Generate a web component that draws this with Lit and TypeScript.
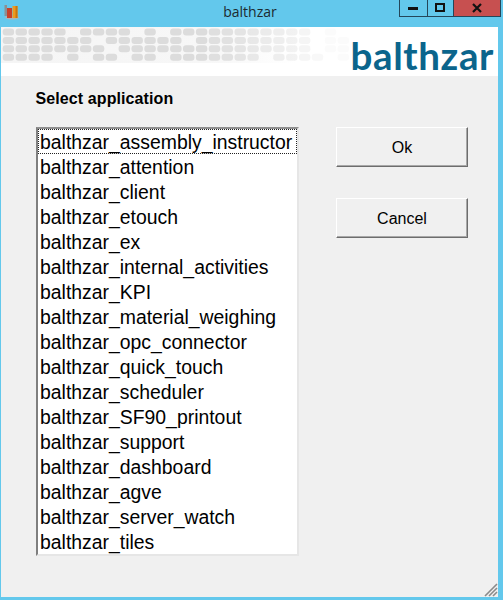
import { LitElement, html, css, svg } from "lit";
import { customElement } from "lit/decorators.js";

const APPS = [
  "balthzar_assembly_instructor",
  "balthzar_attention",
  "balthzar_client",
  "balthzar_etouch",
  "balthzar_ex",
  "balthzar_internal_activities",
  "balthzar_KPI",
  "balthzar_material_weighing",
  "balthzar_opc_connector",
  "balthzar_quick_touch",
  "balthzar_scheduler",
  "balthzar_SF90_printout",
  "balthzar_support",
  "balthzar_dashboard",
  "balthzar_agve",
  "balthzar_server_watch",
  "balthzar_tiles",
];

const PATTERN = [
  "111110111101011111111111010",
  "111111101111110111111111011",
  "111111110111111111111111011",
  "111101011011011111110111101",
];

function patternCells() {
  const cells: unknown[] = [];
  PATTERN.forEach((row, r) => {
    [...row].forEach((c, i) => {
      if (c !== "1") return;
      const x = 1.7 + i * 12.88;
      const y = 1.5 + r * 8.4;
      const fade = i < 15 ? 1 : Math.max(0.12, 1 - (i - 15) * 0.09);
      cells.push(
        svg`<rect x=${x} y=${y} width="11.4" height="7" rx="3" fill="#dcdcdc" opacity=${fade}></rect>`
      );
    });
  });
  return cells;
}

@customElement("app-root")
export class AppRoot extends LitElement {
  static styles = css`
    :host {
      display: block;
      width: 503px;
      height: 600px;
      font-family: "Liberation Sans", Arial, sans-serif;
      color: #000;
    }
    .window {
      position: relative;
      box-sizing: border-box;
      width: 503px;
      height: 600px;
      display: flex;
      flex-direction: column;
      background: #63c8ec;
      padding: 0 5px 3px 1px;
      overflow: hidden;
    }
    .titlebar {
      flex: 0 0 27px;
      display: grid;
      grid-template-columns: 1fr auto 1fr;
      margin-right: -5px;
      margin-left: -1px;
      align-items: start;
    }
    .app-icon {
      display: block;
      margin: 4px 0 0 3px;
    }
    .title {
      font-family: "Open Sans", "Noto Sans", sans-serif;
      font-size: 14px;
      line-height: 24px;
      color: #1c2a30;
      margin-left: -3px;
    }
    .controls {
      justify-self: end;
      display: flex;
      height: 17px;
      margin-right: 2px;
      box-sizing: border-box;
      border: 1px solid #24475a;
      border-top: none;
    }
    .ctl {
      height: 16px;
      display: flex;
      align-items: center;
      justify-content: center;
    }
    .min {
      width: 27px;
      border-right: 1px solid #24475a;
    }
    .max {
      width: 25px;
      border-right: 1px solid #24475a;
    }
    .close {
      width: 46px;
      background: #c75050;
    }
    .body {
      flex: 1;
      display: flex;
      flex-direction: column;
      background: #f0f0f0;
    }
    .banner {
      flex: 0 0 49px;
      background: #fff;
      display: flex;
      justify-content: space-between;
      align-items: flex-start;
    }
    .pattern {
      display: block;
      width: 348px;
      height: 36px;
      background: linear-gradient(90deg, #f5f5f5 0%, #f7f7f7 60%, #fff 85%);
    }
    .logo {
      font-family: "Lato", "Noto Sans", sans-serif;
      font-weight: 700;
      font-size: 38.5px;
      line-height: 42px;
      letter-spacing: 0.6px;
      color: #0b658c;
      margin: 7px 4px 0 0;
    }
    .label {
      font-size: 16px;
      font-weight: 700;
      line-height: 18px;
      letter-spacing: 0.1px;
      margin: 14px 0 0 34.5px;
    }
    .main {
      display: flex;
      align-items: flex-start;
      margin: 19px 0 0 35px;
      gap: 37px;
    }
    .list {
      box-sizing: border-box;
      width: 263px;
      height: 429px;
      border: 2px solid;
      border-color: #8f8f8f #e6e6e6 #e6e6e6 #7f7f7f;
      background: #fff;
      padding: 0;
    }
    .item {
      box-sizing: border-box;
      height: 25px;
      line-height: 27px;
      font-size: 19.4px;
      padding-left: 2px;
      white-space: nowrap;
    }
    .item.sel {
      outline: 1px dotted #222;
      outline-offset: -1px;
    }
    .buttons {
      display: flex;
      flex-direction: column;
      gap: 31px;
    }
    .btn {
      box-sizing: border-box;
      width: 132px;
      height: 40px;
      padding: 2px 0 0;
      font-family: inherit;
      font-size: 16px;
      color: #000;
      background: #f0f0f0;
      border: 1px solid;
      border-color: #fff #6d6d6d #6d6d6d #fff;
      box-shadow: inset -1px -1px 0 #a8a8a8;
    }
    .grip {
      position: absolute;
      right: 5px;
      bottom: 3px;
      display: block;
    }
  `;

  render() {
    return html`
      <div class="window">
        <div class="titlebar">
          <svg class="app-icon" width="16" height="16" viewBox="0 0 16 16">
            <ellipse cx="9" cy="13.5" rx="7" ry="2" fill="#a9b6bb"></ellipse>
            <rect x="1.5" y="1" width="2.5" height="11" fill="#8c8f92"></rect>
            <rect x="4" y="4" width="5" height="10" fill="#c8402a"></rect>
            <rect x="9.5" y="2" width="5" height="12" fill="#ee9a1e"></rect>
            <rect x="12.5" y="2" width="2" height="12" fill="#c8760f"></rect>
          </svg>
          <div class="title">balthzar</div>
          <div class="controls">
            <div class="ctl min">
              <svg width="11" height="4" viewBox="0 0 11 4"><rect width="10" height="3" y="1" fill="#111"></rect></svg>
            </div>
            <div class="ctl max">
              <svg width="11" height="10" viewBox="0 0 11 10">
                <rect x="1" y="1" width="8" height="7" fill="none" stroke="#111" stroke-width="2"></rect>
              </svg>
            </div>
            <div class="ctl close">
              <svg width="10" height="10" viewBox="0 0 10 10">
                <path d="M1 1 L9 9 M9 1 L1 9" stroke="#111" stroke-width="2.2" fill="none"></path>
              </svg>
            </div>
          </div>
        </div>
        <div class="body">
          <div class="banner">
            <svg class="pattern" viewBox="0 0 348 36">${patternCells()}</svg>
            <div class="logo">balthzar</div>
          </div>
          <div class="label">Select application</div>
          <div class="main">
            <div class="list">
              ${APPS.map(
                (a, i) => html`<div class="item ${i === 0 ? "sel" : ""}">${a}</div>`
              )}
            </div>
            <div class="buttons">
              <button class="btn">Ok</button>
              <button class="btn">Cancel</button>
            </div>
          </div>
        </div>
        <svg class="grip" width="14" height="14" viewBox="0 0 14 14">
          <path d="M13 1 L1 13 M13 5 L5 13 M13 9 L9 13" stroke="#8a8a8a" stroke-width="1.6" fill="none"></path>
        </svg>
      </div>
    `;
  }
}
